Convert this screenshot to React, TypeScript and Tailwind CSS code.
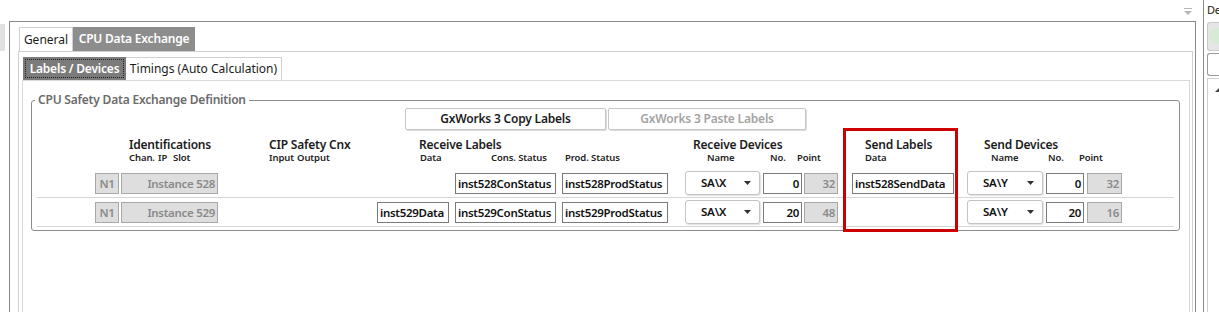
import type { ReactNode } from 'react';

type Row = {
  instance: string;
  data: string;
  con: string;
  prod: string;
  rxNo: string;
  rxPoint: string;
  send: string;
  txNo: string;
  txPoint: string;
};

const rows: Row[] = [
  {
    instance: 'Instance 528',
    data: '',
    con: 'inst528ConStatus',
    prod: 'inst528ProdStatus',
    rxNo: '0',
    rxPoint: '32',
    send: 'inst528SendData',
    txNo: '0',
    txPoint: '32',
  },
  {
    instance: 'Instance 529',
    data: 'inst529Data',
    con: 'inst529ConStatus',
    prod: 'inst529ProdStatus',
    rxNo: '20',
    rxPoint: '48',
    send: '',
    txNo: '20',
    txPoint: '16',
  },
];

const cell =
  'shrink-0 h-[21px] border px-[2px] text-[11.5px] font-semibold tracking-[-0.3px] leading-[19px] whitespace-nowrap overflow-hidden';
const textBox = `${cell} border-[#7a7a7a] bg-white text-[#111]`;
const grayBox = `${cell} border-[#a8a8a8] bg-[#dedede] text-[#8a8a8a]`;

function Select({ value, className }: { value: string; className: string }) {
  return (
    <div
      className={`${className} shrink-0 h-[24px] flex items-center justify-between rounded-[3px] border border-[#c3c3c3] bg-white pl-[15px] pr-[8px] shadow-[1px_1px_1px_rgba(0,0,0,0.12)]`}
    >
      <span className="text-[11.5px] font-semibold tracking-[-0.2px] leading-[16px] text-[#111]">{value}</span>
      <svg width="7" height="4" viewBox="0 0 7 4">
        <polygon points="0,0 7,0 3.5,4" fill="#333" />
      </svg>
    </div>
  );
}

function Title({ children }: { children: ReactNode }) {
  return (
    <div className="h-[15px] text-[12px] font-semibold tracking-[-0.2px] leading-[15px] text-[#1b1b1b] whitespace-nowrap">
      {children}
    </div>
  );
}

function Sub({ children }: { children: ReactNode }) {
  return (
    <div className="flex h-[12px] text-[9.5px] font-semibold tracking-[-0.1px] leading-[12px] text-[#222] whitespace-nowrap">
      {children}
    </div>
  );
}

function Header() {
  return (
    <div className="mt-[7px] flex h-[32px]">
      <div className="ml-[92px] w-[140px] shrink-0">
        <Title>Identifications</Title>
        <Sub>
          <span className="w-[29px]">Chan.</span>
          <span className="w-[15px]">IP</span>
          <span>Slot</span>
        </Sub>
      </div>
      <div className="w-[150px] shrink-0">
        <Title>CIP Safety Cnx</Title>
        <Sub>
          <span className="w-[28px]">Input</span>
          <span>Output</span>
        </Sub>
      </div>
      <div className="w-[274px] shrink-0">
        <Title>Receive Labels</Title>
        <Sub>
          <span className="w-[72px] pl-[1px]">Data</span>
          <span className="w-[74px]">Cons. Status</span>
          <span>Prod. Status</span>
        </Sub>
      </div>
      <div className="w-[172px] shrink-0">
        <Title>Receive Devices</Title>
        <Sub>
          <span className="w-[77px] pl-[14px]">Name</span>
          <span className="w-[27px]">No.</span>
          <span>Point</span>
        </Sub>
      </div>
      <div className="w-[119px] shrink-0">
        <Title>Send Labels</Title>
        <Sub>
          <span>Data</span>
        </Sub>
      </div>
      <div className="shrink-0">
        <Title>Send Devices</Title>
        <Sub>
          <span className="w-[64px] pl-[7px]">Name</span>
          <span className="w-[31px]">No.</span>
          <span>Point</span>
        </Sub>
      </div>
    </div>
  );
}

function DataRow({ r }: { r: Row }) {
  return (
    <div className="flex h-[29px] items-center border-b border-[#d6d6d6]">
      <div className={`${grayBox} ml-[58px] w-[24px] text-center`}>N1</div>
      <div className={`${grayBox} ml-[2px] w-[97px] text-right`}>{r.instance}</div>
      {r.data ? (
        <div className={`${textBox} ml-[159px] w-[72px]`}>{r.data}</div>
      ) : (
        <div className="ml-[159px] w-[72px] shrink-0" />
      )}
      <div className={`${textBox} ml-[6px] w-[101px]`}>{r.con}</div>
      <div className={`${textBox} ml-[6px] w-[106px]`}>{r.prod}</div>
      <Select value="SA\X" className="ml-[17px] w-[75px]" />
      <div className={`${textBox} ml-[3px] w-[39px] text-right`}>{r.rxNo}</div>
      <div className={`${grayBox} ml-[2px] w-[34px] text-right`}>{r.rxPoint}</div>
      {r.send ? (
        <div className={`${textBox} ml-[14px] w-[102px]`}>{r.send}</div>
      ) : (
        <div className="ml-[14px] w-[102px] shrink-0" />
      )}
      <Select value="SA\Y" className="ml-[13px] w-[76px]" />
      <div className={`${textBox} ml-[3px] w-[38px] text-right`}>{r.txNo}</div>
      <div className={`${grayBox} ml-[3px] w-[35px] text-right`}>{r.txPoint}</div>
    </div>
  );
}

export default function App() {
  return (
    <div className="flex h-[312px] w-[1219px] overflow-hidden bg-white font-['Noto_Sans','Open_Sans',sans-serif] text-[#1b1b1b]">
      {/* left splitter stub */}
      <div className="w-[9px] shrink-0 pt-[24px]">
        <div className="h-[27px] w-[5px] bg-[#e1e1e1]" />
      </div>

      {/* main docked panel */}
      <div className="flex w-[1187px] shrink-0 flex-col">
        <div className="flex h-[21px] items-start justify-end pr-[4px] pt-[8px]">
          <svg width="8" height="7" viewBox="0 0 8 7">
            <rect x="0" y="0" width="8" height="1" fill="#b8b8b8" />
            <polygon points="0,3 8,3 4,7" fill="#b8b8b8" />
          </svg>
        </div>
        <div className="flex flex-1 flex-col border-x border-t border-[#8a8a8a] pl-[8px] pr-[2px] pt-[5px]">
          {/* outer tabs */}
          <div className="ml-[1px] flex h-[24px]">
            <div className="w-[54px] border-x border-t border-[#d0d0d0] bg-white text-center text-[12px] leading-[23px] text-[#1b1b1b]">
              General
            </div>
            <div className="w-[122px] whitespace-nowrap bg-[#8d8d8d] text-center text-[12px] font-semibold tracking-[-0.2px] leading-[23px] text-white">
              CPU Data Exchange
            </div>
          </div>
          <div className="flex flex-1 flex-col border-x border-t border-[#d0d0d0] pl-[3px] pr-[2px] pt-[5px]">
            {/* inner tabs */}
            <div className="ml-[1px] flex h-[23px]">
              <div className="w-[103px] bg-[#7b7b7b] p-[2px]">
                <div className="h-full whitespace-nowrap border border-dotted border-[#1e1e1e] text-center text-[12px] font-semibold tracking-[-0.2px] leading-[18px] text-white">
                  Labels / Devices
                </div>
              </div>
              <div className="w-[156px] border-r border-t border-[#d0d0d0] bg-white text-center text-[12px] leading-[21px] text-[#1b1b1b]">
                Timings (Auto Calculation)
              </div>
            </div>
            <div className="flex-1 border-x border-t border-[#d9d9d9] pl-[8px] pr-[9px] pt-[11px]">
              <fieldset className="rounded-[3px] border border-[#8c8c8c] px-[5px] pb-[3px]">
                <legend className="-ml-[2px] px-[3px] text-[12px] font-semibold tracking-[-0.2px] leading-[16px] text-[#6b6b6b]">
                  CPU Safety Data Exchange Definition
                </legend>
                <div className="relative">
                  <div className="flex justify-center gap-[2px]">
                    <div className="h-[22px] w-[201px] rounded-[2px] border border-[#c6c6c6] bg-white text-center text-[12px] font-semibold tracking-[-0.2px] leading-[20px] text-[#1b1b1b] shadow-[1px_1px_1px_rgba(0,0,0,0.15)]">
                      GxWorks 3 Copy Labels
                    </div>
                    <div className="h-[22px] w-[198px] rounded-[2px] border border-[#c6c6c6] bg-white text-center text-[12px] font-semibold tracking-[-0.2px] leading-[20px] text-[#a3a3a3] shadow-[1px_1px_1px_rgba(0,0,0,0.15)]">
                      GxWorks 3 Paste Labels
                    </div>
                  </div>
                  <Header />
                  {rows.map((r) => (
                    <DataRow key={r.instance} r={r} />
                  ))}
                  {/* highlight annotation */}
                  <div className="pointer-events-none absolute left-[806px] top-[20px] h-[104px] w-[115px] border-[3px] border-[#cc0000]" />
                </div>
              </fieldset>
            </div>
          </div>
        </div>
      </div>

      <div className="w-[7px] shrink-0" />

      {/* right docked panel (clipped) */}
      <div className="flex w-[16px] shrink-0 flex-col overflow-hidden border-l border-[#8a8a8a]">
        <div className="h-[22px] whitespace-nowrap pl-[3px] pt-[2px] text-[11px] tracking-[-0.3px] leading-[16px] text-[#1b1b1b]">De</div>
        <div className="ml-[3px] h-[29px] rounded-l-[3px] border-y border-l border-[#c8c8c8] bg-[#e6e6e6] pl-[1px] pt-[5px]">
          <div className="h-[16px] w-[16px] rounded-full bg-[#d6ead6]" />
        </div>
        <div className="ml-[3px] mt-[2px] h-[23px] rounded-l-[3px] border-y border-l border-[#9a9a9a] bg-white" />
        <div className="ml-[3px] mt-[2px] flex-1 border-l border-t border-[#d0d0d0] pl-[7px] pt-[8px]">
          <svg width="5" height="5" viewBox="0 0 5 5">
            <polygon points="5,0 5,5 0,5" fill="#444" />
          </svg>
        </div>
      </div>
    </div>
  );
}
